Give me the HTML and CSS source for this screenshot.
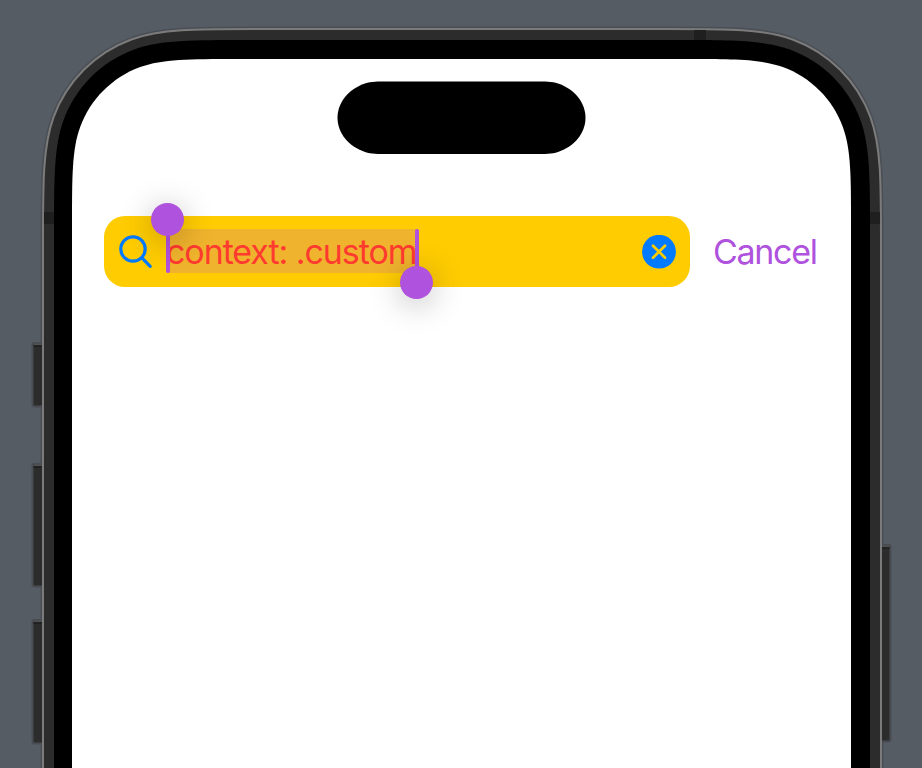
FILE: index.html
```html
<!DOCTYPE html>
<html lang="en">
<head>
<meta charset="utf-8">
<title>Search</title>
<link rel="stylesheet" href="styles.css">
</head>
<body>
<svg class="device" viewBox="0 0 922 768" aria-hidden="true">
  <path class="edge" d="M43 900V243c0-61.6 0-96.8 10.5-125.6c13.2-36.2 41.7-64.7 77.9-77.9c28.8-10.5 64-10.5 125.6-10.5H667c61.6 0 96.8 0 125.6 10.5c36.2 13.2 64.7 41.7 77.9 77.9c10.5 28.8 10.5 64 10.5 125.6V900Z"/>
  <!-- side buttons -->
  <g class="button">
    <rect x="32.5" y="343" width="16" height="63.5" rx="2"/>
    <rect x="32.5" y="464" width="16" height="122.5" rx="2"/>
    <rect x="32.5" y="620" width="16" height="123.5" rx="2"/>
    <rect x="876" y="545" width="14.5" height="196.5" rx="2"/>
  </g>
  <g class="button-light">
    <path d="M34 344.5h10M34 465.5h10M34 621.5h10M881 546.5h8.5"/>
  </g>
  <g class="button-dark">
    <path d="M33.500 346h10M33.500 467h10M33.500 623h10M881 548h8.500"/>
  </g>
  <!-- metal frame -->
  <path class="frame" d="M43 900V243c0-61.6 0-96.8 10.5-125.6c13.2-36.2 41.7-64.7 77.9-77.9c28.8-10.5 64-10.5 125.6-10.5H667c61.6 0 96.8 0 125.6 10.5c36.2 13.2 64.7 41.7 77.9 77.9c10.5 28.8 10.5 64 10.5 125.6V900Z"/>
  <g class="band">
    <rect x="694" y="30" width="12" height="11"/>
    <rect x="44" y="212" width="11" height="12"/>
    <rect x="869" y="212" width="11" height="12"/>
  </g>
  <path class="bezel" d="M54 900V234.1c0-55.9 0-87.8 9.5-113.9c12-32.9 37.8-58.7 70.7-70.7c26.1-9.5 58-9.5 113.9-9.5H675.9c55.9 0 87.8 0 113.9 9.5c32.9 12 58.7 37.8 70.7 70.7c9.5 26.1 9.5 58 9.5 113.9V900Z"/>
  <path class="glass" d="M72 900V224.1C72 176.6 72 149.4 80.1 127.2C90.3 99.3 112.3 77.3 140.2 67.1C162.4 59 189.6 59 237.1 59H685.9C733.4 59 760.6 59 782.8 67.1C810.7 77.3 832.7 99.3 842.9 127.2C851 149.4 851 176.6 851 224.1V900Z"/>
</svg>
<main class="screen">
  <svg class="island" viewBox="0 0 248 73" aria-hidden="true">
    <path d="M50 .5H197C207 .5 213.800 .5 220 2.500C236.500 8 247.500 21.500 247.500 36.800S236.500 65.500 220 71C213.800 73 207 73 197 73H50C40 73 33.200 73 27 71C10.500 65.500 -.5 52 -.5 36.800S10.500 8 27 2.500C33.200 .5 40 .5 50 .5Z"/>
  </svg>
  <div class="search-row">
    <div class="search-bar">
      <svg class="magnifier" viewBox="0 0 34 36" aria-hidden="true">
        <circle cx="14" cy="14" r="12.200"/>
        <path d="M23.200 23.200L31.200 31.300"/>
      </svg>
      <div class="selection">
        <span class="query">context: .custom</span>
        <i class="handle handle-start"></i>
        <i class="handle handle-end"></i>
      </div>
      <svg class="clear" viewBox="0 0 34 34" aria-hidden="true">
        <circle cx="17" cy="16.700" r="16.900"/>
        <path d="M11 10.700L23 22.700M23 10.700L11 22.700"/>
      </svg>
    </div>
    <span class="cancel">Cancel</span>
  </div>
</main>
</body>
</html>
```

FILE: styles.css
```css
* { box-sizing: border-box; }

body {
  margin: 0;
  width: 922px;
  height: 768px;
  overflow: hidden;
  position: relative;
  background: #565c64;
  font-family: Inter, "Liberation Sans", sans-serif;
}

.device {
  position: absolute;
  inset: 0;
  width: 922px;
  height: 768px;
}

.button { fill: #2c2c2c; stroke: #494d53; stroke-width: 2; }
.button-light { stroke: #515151; stroke-width: 1.500; }
.button-dark { stroke: #1e1e1e; stroke-width: 1.500; }
.edge { fill: none; stroke: #4a4e55; stroke-width: 5; }
.frame { fill: #2c2c2c; stroke: #7b7b7b; stroke-width: 2; }
.band { fill: #1f1f1f; }
.bezel { fill: #000; }
.glass { fill: #fff; }

.screen {
  position: relative;
  display: flex;
  flex-direction: column;
  align-items: center;
  margin: 0 71px 0 72px;
  padding-top: 81px;
}

.island {
  width: 248px;
  height: 73px;
  overflow: visible;
}

.search-row {
  display: flex;
  align-items: center;
  align-self: stretch;
  height: 71px;
  margin-top: 62px;
  padding-left: 32px;
}

.search-bar {
  display: flex;
  align-items: center;
  width: 586.400px;
  height: 71px;
  padding: 0 14.400px 0 15px;
  border-radius: 21px;
  background: #ffcc02;
}

.magnifier {
  width: 34px;
  height: 36px;
  margin-top: 2px;
  fill: none;
  stroke: #007aff;
  stroke-width: 3.200;
  stroke-linecap: round;
}

.selection {
  position: relative;
  width: 250px;
  height: 44px;
  margin: -1px 0 0 14px;
  background: #efb32d;
}

.query {
  display: block;
  margin-left: -1px;
  line-height: 46px;
  font-size: 34px;
  letter-spacing: -1.080px;
  color: #ff3b30;
  white-space: nowrap;
}

.handle {
  position: absolute;
  width: 4px;
  height: 43px;
  border-radius: 2px;
  background: #af52de;
}

.handle::after {
  content: "";
  position: absolute;
  left: -15px;
  width: 33px;
  height: 33px;
  border-radius: 50%;
  background: #af52de;
  box-shadow: 0 5px 32px rgba(0, 0, 0, 0.280);
}

.handle-start { left: -1px; top: 0.500px; }
.handle-start::after { top: -27px; }
.handle-end { right: -2px; top: 0; }
.handle-end::after { top: 37.400px; }

.clear {
  width: 34px;
  height: 34px;
  margin-left: auto;
  fill: #007aff;
}

.clear path {
  stroke: #ffcc02;
  stroke-width: 2.700;
  stroke-linecap: round;
}

.cancel {
  margin-left: 22.600px;
  font-size: 34px;
  line-height: 44px;
  letter-spacing: -1.300px;
  color: #af52de;
}
```
